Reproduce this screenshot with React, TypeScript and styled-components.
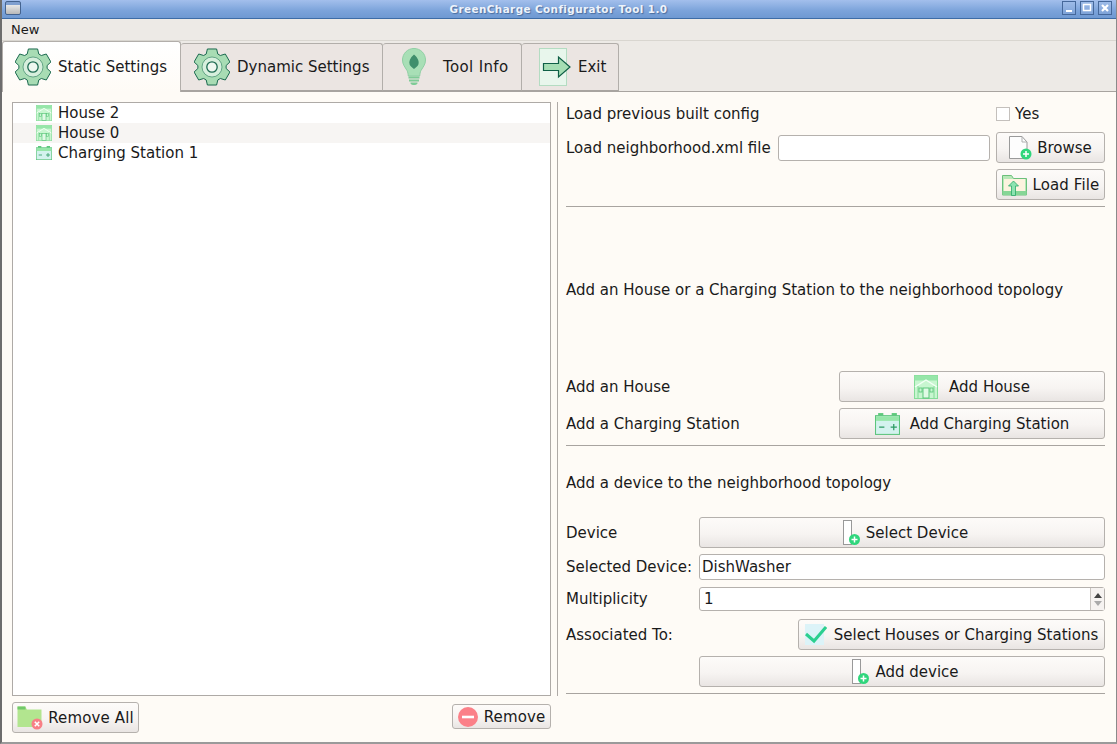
import React from "react";
import styled, { createGlobalStyle } from "styled-components";

const Global = createGlobalStyle`
  html, body { margin: 0; padding: 0; background: #fefbf6; }
  * { box-sizing: border-box; }
`;

const Window = styled.div`
  width: 1117px; height: 744px; overflow: hidden; display: flex; flex-direction: column;
  font-family: "DejaVu Sans", sans-serif; font-size: 15px; color: #1a1a1a;
  background: #edeae6; border-left: 2px solid #6d6d6d; border-right: 1px solid #8a8a8a; border-bottom: 2px solid #9a9a9a;
`;
const TitleBar = styled.div`
  margin-left: -2px; margin-right: -1px; height: 19px; flex: none; position: relative; display: flex; align-items: center; justify-content: center;
  background: linear-gradient(#a3bfec, #7ba3da 60%, #6f99d2); border-bottom: 1px solid #3d6ca6;
`;
const TitleText = styled.span`
  font-family: "DejaVu Sans", sans-serif; font-weight: bold; font-size: 10.4px; letter-spacing: 0.42px; color: #eef3fb; text-shadow: 1px 1px 1px #4a6d9e;
`;
const WinIcon = styled.div`
  position: absolute; left: 5px; top: 1px; width: 16px; height: 14px; border: 1px solid #44638f; border-radius: 2px;
  background: linear-gradient(#7f9fd0 0 3px, #e8e8e8 3px, #b8b8b8);
`;
const WinButtons = styled.div`
  position: absolute; right: 5px; top: 1px; display: flex; gap: 4px;
`;
const WinButton = styled.div`
  width: 14px; height: 14px; border: 1px solid #45689b; background: linear-gradient(#9dbbe8, #7ea3d8); color: #fff; display: flex; align-items: center; justify-content: center;
`;
const MenuBar = styled.div`
  height: 21px; flex: none; display: flex; align-items: center; padding-left: 9px; font-size: 13px; background: #edeae6;
`;
const TabBar = styled.div`
  height: 51px; flex: none; display: flex; align-items: flex-end; border-top: 1px solid #d9d6d0; position: relative;
`;
const Tab = styled.div<{ $active?: boolean; $w: number; $pad: number; $gap: number; $ls?: number }>`
  width: ${(p) => p.$w}px; height: ${(p) => (p.$active ? 51 : 48)}px; flex: none; display: flex; align-items: center;
  padding-left: ${(p) => p.$pad}px; gap: ${(p) => p.$gap}px; letter-spacing: ${(p) => p.$ls ?? 0}px;
  background: ${(p) => (p.$active ? "linear-gradient(#ffffff, #fefbf6)" : "#ebe5e2")};
  border: 1px solid #b2aeaa; border-left-width: ${(p) => (p.$active ? 1 : 0)}px; border-bottom: ${(p) => (p.$active ? "none" : "1px solid #a8a4a0")};
  border-radius: 3px 3px 0 0;
  margin-bottom: ${(p) => (p.$active ? -1 : 0)}px; position: relative; z-index: ${(p) => (p.$active ? 1 : 0)};
`;
const Pane = styled.div`
  flex: 1; min-height: 0; display: flex; background: #fefbf6; border-top: 1px solid #a8a4a0; padding: 10px 11px 0 10px;
`;
const LeftCol = styled.div`
  width: 539px; flex: none; display: flex; flex-direction: column;
`;
const Tree = styled.div`
  height: 594px; flex: none; background: #fff; border: 1px solid #aeaaa6;
`;
const TreeRow = styled.div<{ $alt?: boolean }>`
  height: 20px; display: flex; align-items: center; padding-left: 23px; gap: 6px; background: ${(p) => (p.$alt ? "#f7f5f3" : "#fff")};
`;
const LeftButtons = styled.div`
  margin-top: 6px; display: flex; justify-content: space-between; align-items: flex-start;
`;
const Btn = styled.button<{ $w?: number; $h?: number; $gap?: number; $shift?: number; $ls?: number }>`
  width: ${(p) => (p.$w ? `${p.$w}px` : "auto")}; height: ${(p) => p.$h ?? 31}px; flex: none; display: flex; align-items: center; justify-content: center; gap: ${(p) => p.$gap ?? 6}px;
  padding: 0 0 0 ${(p) => p.$shift ?? 0}px; font: inherit; color: inherit; letter-spacing: ${(p) => p.$ls ?? 0}px;
  background: linear-gradient(#fdfbf9, #f7f4f2 55%, #e9e5e3); border: 1px solid #b5b1ad; border-radius: 3px;
`;
const RemoveBtn = styled(Btn)`
  margin-top: 2px;
`;
const Divider = styled.div`
  width: 1px; height: 594px; flex: none; background: #aeaaa6; margin: 0 8px 0 6px;
`;
const RightCol = styled.div`
  flex: 1; min-width: 0; display: flex; flex-direction: column;
`;
const Row = styled.div<{ $top?: number; $h?: number }>`
  display: flex; align-items: center; justify-content: space-between; height: ${(p) => p.$h ?? 31}px; margin-top: ${(p) => p.$top ?? 0}px; flex: none;
`;
const EndRow = styled(Row)`
  justify-content: flex-end;
`;
const Group = styled.div`
  display: flex; align-items: center; gap: 6px;
`;
const Rule = styled.div<{ $top: number }>`
  height: 1px; background: #a8a4a0; margin-top: ${(p) => p.$top}px; flex: none;
`;
const Note = styled.div<{ $top: number }>`
  margin-top: ${(p) => p.$top}px; height: 18px; line-height: 18px; flex: none;
`;
const Check = styled.div`
  width: 14px; height: 14px; border: 1px solid #c4c0bc; background: #fff;
`;
const YesGroup = styled.div`
  width: 109px; display: flex; align-items: center; gap: 5px;
`;
const TextInput = styled.div<{ $w?: number; $h?: number; $pl?: number }>`
  width: ${(p) => (p.$w ? `${p.$w}px` : "406px")}; height: ${(p) => p.$h ?? 26}px; flex: none; background: #fff; border: 1px solid #b5b1ad; border-radius: 3px; display: flex; align-items: center; padding-left: ${(p) => p.$pl ?? 2}px; position: relative;
`;
const Spin = styled.div`
  position: absolute; right: 0; top: 0; bottom: 0; width: 14px; border-left: 1px solid #c8c4c0; display: flex; flex-direction: column; align-items: center; justify-content: center; gap: 3px; background: #f6f3f1;
`;
const Tri = styled.div<{ $up?: boolean }>`
  width: 0; height: 0; border-left: 4px solid transparent; border-right: 4px solid transparent;
  ${(p) => (p.$up ? "border-bottom: 5px solid #444;" : "border-top: 5px solid #aaa;")}
`;

const gearPath = () => {
  const cx = 18, cy = 19, n = 6; let d = "";
  for (let i = 0; i < n; i++) {
    const a = (i * 2 * Math.PI) / n - Math.PI / 2;
    const pts: [number, number][] = [
      [14.2, a - 0.42], [18.6, a - 0.25], [18.6, a + 0.25], [14.2, a + 0.42],
    ];
    pts.forEach(([r, t], j) => {
      d += `${i === 0 && j === 0 ? "M" : "L"}${(cx + r * Math.cos(t)).toFixed(2)} ${(cy + r * Math.sin(t)).toFixed(2)} `;
    });
  }
  return d + "Z";
};

const Gear = () => (
  <svg width="36" height="38" viewBox="0 0 36 38">
    <path d={gearPath()} fill="#a8dcb4" stroke="#1c6a50" strokeWidth="1" strokeLinejoin="round" />
    <circle cx="18" cy="19" r="10" fill="#d7efdd" stroke="#3e8a6a" strokeWidth=".7" />
    <circle cx="18" cy="19" r="5.200" fill="#eef8f0" stroke="#1c6a50" strokeWidth="1.300" />
  </svg>
);
const Bulb = () => (
  <svg width="24" height="38" viewBox="0 0 24 38">
    <path d="M12 .5C5.500.5.500 5.600.500 12c0 4.500 2.500 7 4.500 10.500 1 1.800 1 3.500 1.300 5.500h11.400c.3-2 .3-3.700 1.300-5.500C21 19 23.500 16.500 23.500 12 23.500 5.600 18.500.500 12 .500Z" fill="#a8dfb6" stroke="#8fcfa4" />
    <path d="M12 6.500c-4 3.500-5.500 7-4.300 10.200.9 2 2.700 2.800 4.300 4.300 1.600-1.500 3.400-2.300 4.300-4.300C17.500 13.500 16 10 12 6.500Z" fill="#3f8f6c" />
    <path d="M6.500 28.500h11v2h-11zM7 31.500h10v2H7zM8.500 34.500h7v1C14 37.500 10 37.500 8.500 35.500z" fill="#7ecb96" />
  </svg>
);
const ExitIcon = () => (
  <svg width="32" height="38" viewBox="0 0 32 38">
    <rect x=".5" y=".5" width="27" height="37" fill="#e8f6ec" stroke="#b4dcc2" />
    <path d="M4.500 15.500h15V9L31 19 19.500 29v-6.500h-15Z" fill="#a5deb4" stroke="#0f5f46" strokeWidth="1.200" />
  </svg>
);
const House = ({ s = 16 }: { s?: number }) => (
  <svg width={s} height={s} viewBox="0 0 24 24">
    <rect x=".5" y=".5" width="23" height="23" fill="#c8f6d0" stroke="#85dc98" />
    <rect x=".5" y=".5" width="23" height="5" fill="#96e6a9" />
    <path d="M1 12 12 5l11 7" fill="none" stroke="#f4fff6" strokeWidth="1.400" />
    <path d="M4 11v12M20 11v12" stroke="#74d28c" strokeWidth=".8" />
    <rect x="9" y="13" width="6" height="10" fill="#e0fae5" stroke="#52c273" strokeWidth=".9" />
    <rect x="5" y="13" width="3" height="4" fill="none" stroke="#52c273" strokeWidth=".8" />
    <rect x="16" y="13" width="3" height="4" fill="none" stroke="#52c273" strokeWidth=".8" />
  </svg>
);
const Battery = ({ s = 16 }: { s?: number }) => (
  <svg width={s} height={Math.round(s * 0.86)} viewBox="0 0 24 21">
    <rect x="3" y="0" width="5" height="3" fill="#5fc97c" />
    <rect x="16" y="0" width="5" height="3" fill="#5fc97c" />
    <rect x=".5" y="2.500" width="23" height="18" fill="#d3f2ee" stroke="#5cc47d" />
    <rect x="1" y="3" width="22" height="4.500" fill="#96e6a9" />
    <path d="M4 13.500h5M15 13.500h6M18 10.500v6" stroke="#2d9b63" strokeWidth="1.200" />
  </svg>
);
const FileAdd = () => (
  <svg width="23" height="24" viewBox="0 0 23 24">
    <path d="M.5.500H13l5 5.500v16.500H.5Z" fill="#fdfdfd" stroke="#9a9a9a" />
    <path d="M13 .5V6h5" fill="none" stroke="#b0b0b0" />
    <circle cx="17" cy="18" r="5.500" fill="#2fd67c" />
    <path d="M14 18h6M17 15v6" stroke="#fff" strokeWidth="1.500" />
  </svg>
);
const SlimAdd = () => (
  <svg width="18" height="25" viewBox="0 0 18 25">
    <rect x=".5" y=".5" width="8" height="24" fill="#fff" stroke="#999" />
    <circle cx="11.500" cy="19.500" r="5.500" fill="#2fd67c" />
    <path d="M8.500 19.500h6M11.500 16.500v6" stroke="#fff" strokeWidth="1.500" />
  </svg>
);
const FolderUp = () => (
  <svg width="25" height="22" viewBox="0 0 25 22">
    <path d="M.5 21V1.500h9l2 3h13V21Z" fill="#b8e8b8" stroke="#6cc07c" />
    <rect x="2" y="5" width="21" height="13" fill="#fcf3df" />
    <rect x=".5" y="17" width="24" height="4" fill="#86d696" />
    <path d="M11.500 7l-5 5h3v9.500h4V12h3Z" fill="#8ce3b0" stroke="#28a868" strokeWidth=".8" />
  </svg>
);
const FolderDel = () => (
  <svg width="26" height="24" viewBox="0 0 26 24">
    <path d="M.5 21V.500H8l2 3h14.500V21Z" fill="#b2e58f" />
    <rect x=".5" y=".5" width="8" height="3" fill="#72c96a" />
    <circle cx="20" cy="18" r="5.500" fill="#f87f86" />
    <path d="M17.800 15.800l4.400 4.400M22.200 15.800l-4.400 4.400" stroke="#fff" strokeWidth="1.600" />
  </svg>
);
const RemoveIcon = () => (
  <svg width="20" height="20" viewBox="0 0 20 20">
    <circle cx="10" cy="10" r="10" fill="#fb8088" />
    <rect x="4" y="8.700" width="12" height="2.600" fill="#fff" />
  </svg>
);
const CheckIcon = () => (
  <svg width="22" height="22" viewBox="0 0 22 22">
    <rect x="0" y="0" width="19" height="21" fill="#dcf3f8" />
    <path d="M1 10l8 7L21 3" fill="none" stroke="#2ccf8f" strokeWidth="3" />
  </svg>
);
const Min = () => <svg width="10" height="10"><rect x="2" y="7" width="6" height="2" fill="#fff" /></svg>;
const Max = () => <svg width="10" height="10"><rect x="1.500" y="1.500" width="7" height="6" fill="none" stroke="#fff" strokeWidth="1.500" /></svg>;
const Close = () => <svg width="10" height="10"><path d="M2 2l6 6M8 2l-6 6" stroke="#fff" strokeWidth="2.200" /></svg>;

export default function App() {
  return (
    <Window>
      <Global />
      <TitleBar>
        <WinIcon />
        <TitleText>GreenCharge Configurator Tool 1.0</TitleText>
        <WinButtons>
          <WinButton><Min /></WinButton>
          <WinButton><Max /></WinButton>
          <WinButton><Close /></WinButton>
        </WinButtons>
      </TitleBar>
      <MenuBar>New</MenuBar>
      <TabBar>
        <Tab $active $w={179} $pad={12} $gap={7}><Gear />Static Settings</Tab>
        <Tab $w={202} $pad={13} $gap={7}><Gear />Dynamic Settings</Tab>
        <Tab $w={139} $pad={19} $gap={17} $ls={0.35}><Bulb />Tool Info</Tab>
        <Tab $w={97} $pad={17} $gap={7}><ExitIcon />Exit</Tab>
      </TabBar>
      <Pane>
        <LeftCol>
          <Tree>
            <TreeRow><House />House 2</TreeRow>
            <TreeRow $alt><House />House 0</TreeRow>
            <TreeRow><Battery />Charging Station 1</TreeRow>
          </Tree>
          <LeftButtons>
            <Btn $w={127} $gap={5} $ls={0.15}><FolderDel />Remove All</Btn>
            <RemoveBtn $w={99} $h={25} $ls={0.1}><RemoveIcon />Remove</RemoveBtn>
          </LeftButtons>
        </LeftCol>
        <Divider />
        <RightCol>
          <Row $h={23}>
            Load previous built config
            <YesGroup><Check />Yes</YesGroup>
          </Row>
          <Row $top={7}>
            Load neighborhood.xml file
            <Group>
              <TextInput $w={212} />
              <Btn $w={109} $gap={5}><FileAdd />Browse</Btn>
            </Group>
          </Row>
          <EndRow $top={6}><Btn $w={109} $ls={0.1}><FolderUp />Load File</Btn></EndRow>
          <Rule $top={6} />
          <Note $top={74}>Add an House or a Charging Station to the neighborhood topology</Note>
          <Row $top={72}>Add an House<Btn $w={266} $gap={11}><House s={24} />Add House</Btn></Row>
          <Row $top={6}>Add a Charging Station<Btn $w={266} $gap={10}><Battery s={25} />Add Charging Station</Btn></Row>
          <Rule $top={6} />
          <Note $top={28}>Add a device to the neighborhood topology</Note>
          <Row $top={25}>Device<Btn $w={406} $gap={5} $shift={7}><SlimAdd />Select Device</Btn></Row>
          <Row $top={6} $h={26}>Selected Device:<TextInput>DishWasher</TextInput></Row>
          <Row $top={6} $h={26}>Multiplicity<TextInput $h={24} $pl={4}>1<Spin><Tri $up /><Tri /></Spin></TextInput></Row>
          <Row $top={7}>Associated To:<Btn $w={307} $gap={7}><CheckIcon />Select Houses or Charging Stations</Btn></Row>
          <EndRow $top={6}><Btn $w={406} $gap={5} $shift={7}><SlimAdd />Add device</Btn></EndRow>
          <Rule $top={6} />
        </RightCol>
      </Pane>
    </Window>
  );
}
